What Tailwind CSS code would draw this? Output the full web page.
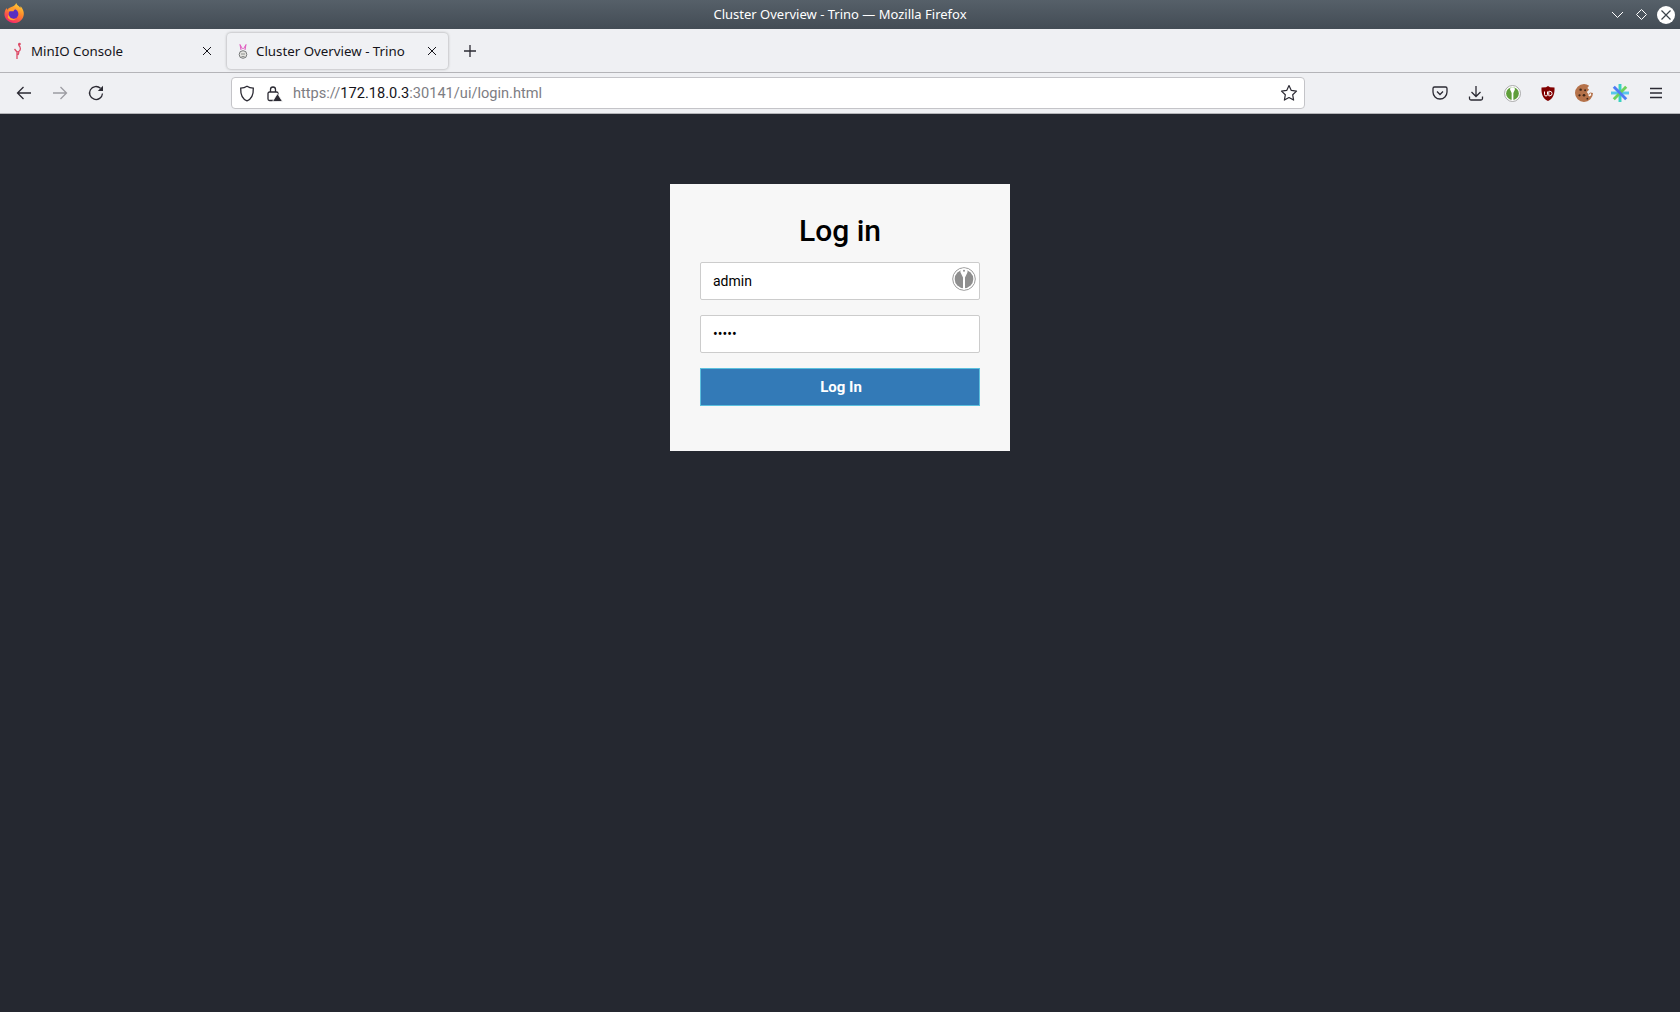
<!DOCTYPE html>
<html lang="en">
<head>
    <meta charset="UTF-8">
    <title>Cluster Overview - Trino</title>
    <script src="https://cdn.jsdelivr.net/npm/@tailwindcss/browser@4"></script>
</head>
<body class="h-screen overflow-hidden flex flex-col bg-[#252830] font-['Noto_Sans',sans-serif]">
    <!-- window title bar -->
    <div class="h-[29px] shrink-0 grid grid-cols-[1fr_auto_1fr] items-center bg-gradient-to-b from-[#566069] to-[#434c55] text-white text-[13px]">
        <div class="pl-[4px] pb-[3px] flex items-center">
            <svg width="20" height="22" viewBox="0 0 22 24">
                <defs>
                    <linearGradient id="fx" x1="0.8" y1="0" x2="0.3" y2="1"><stop offset="0" stop-color="#ffd93a"/><stop offset="0.45" stop-color="#ff8a2a"/><stop offset="1" stop-color="#f5206e"/></linearGradient>
                </defs>
                <path d="M13.500 1c.5 2.500 3 3 4.500 5.500 0-.5 0-1.500.3-2C20.500 7 22 10 21.800 13c-.3 6-5 10-10.800 10S.5 18.500.5 13.500c0-2.500.8-5 2.300-7 .2 1 .5 1.500 1 2 .8-1.500 2.700-2.500 4.200-3 2-.7 4.500-2 5.500-4.500z" fill="url(#fx)"/>
                <circle cx="10.500" cy="13" r="5.300" fill="#5a2fc0"/>
                <path d="M4.500 10c1-3.500 6-5 9.500-3-1.500.5-3 1.500-3.500 3z" fill="#ff9d2e"/>
                <path d="M5 14c1 3.500 4.500 5.500 8.500 4.500-3 2.500-8 1.500-9.500-1.500z" fill="#ffb02e" opacity="0.9"/>
            </svg>
        </div>
        <div class="leading-none">Cluster Overview - Trino — Mozilla Firefox</div>
        <div class="flex items-center justify-end gap-[7px] pr-[5px]">
            <svg width="17" height="17" viewBox="0 0 17 17" fill="none" stroke="#fff" stroke-width="1"><path d="M3 6l5.500 5.500L14 6"/></svg>
            <svg width="17" height="17" viewBox="0 0 17 17" fill="none" stroke="#fff" stroke-width="1"><path d="M8.500 3.500l5 5-5 5-5-5z"/></svg>
            <svg width="18" height="18" viewBox="0 0 18 18" fill="none" stroke="#3b424a" stroke-width="1.200"><circle cx="9" cy="9" r="9" fill="#fff" stroke="none"/><path d="M4.500 4.500l9 9M13.500 4.500l-9 9"/></svg>
        </div>
    </div>

    <!-- tab strip -->
    <div class="h-[44px] shrink-0 flex items-center pl-[2px] gap-1 bg-[#eff0f3] border-b border-[#b4b4b8] text-[13.300px] text-[#15141a]">
        <div class="w-[221px] h-9 flex items-center pl-[9px] pr-[11px] rounded-[4px]">
            <svg width="14" height="18" viewBox="0 0 14 18" fill="none" stroke="#dd4a66" stroke-width="1.300" class="mr-[6px]"><path d="M6 17V10C9 10 10 7 9 5S7 3 8 2M6 10L3.500 7M8 10l-1 3"/><circle cx="8.500" cy="2" r="1.300" fill="#dd4a66" stroke="none"/></svg>
            <span class="flex-1 truncate pt-[2px]">MinIO Console</span>
            <svg width="10" height="10" viewBox="0 0 10 10" stroke="#15141a" stroke-width="1"><path d="M1 1l8 8M9 1l-8 8"/></svg>
        </div>
        <div class="w-[221px] h-9 flex items-center pl-[9px] pr-[11px] rounded-[4px] bg-[#f0f1f4] shadow-[0_0_3px_rgba(0,0,0,0.35)]">
            <svg width="14" height="18" viewBox="0 0 14 18" fill="none" class="mr-[6px]">
                <path d="M5 8L4 2.500 6.500 7M9 8l1-5.500L7.500 7" stroke="#e05cc0" stroke-width="1"/>
                <circle cx="7" cy="12.500" r="3.800" fill="#e4e4e0" stroke="#77797a" stroke-width="1"/>
                <path d="M5 12h4M5.500 14.500h3" stroke="#77797a" stroke-width="0.800"/>
            </svg>
            <span class="flex-1 truncate pt-[2px]">Cluster Overview - Trino</span>
            <svg width="10" height="10" viewBox="0 0 10 10" stroke="#15141a" stroke-width="1"><path d="M1 1l8 8M9 1l-8 8"/></svg>
        </div>
        <div class="w-9 h-9 flex items-center justify-center">
            <svg width="14" height="14" viewBox="0 0 14 14" stroke="#2b2a33" stroke-width="1.300"><path d="M7 1v12M1 7h12"/></svg>
        </div>
    </div>

    <!-- nav bar -->
    <div class="h-[41px] shrink-0 flex items-center pl-[6px] pr-[6px] border-b border-[#b4b4b8] bg-[#eff0f3]">
        <div class="w-9 h-9 flex items-center justify-center">
            <svg width="16" height="16" viewBox="0 0 16 16" fill="none" stroke="#2b2a33" stroke-width="1.300"><path d="M15 8H1.500M7.500 2l-6 6 6 6"/></svg>
        </div>
        <div class="w-9 h-9 flex items-center justify-center">
            <svg width="16" height="16" viewBox="0 0 16 16" fill="none" stroke="#9c9ca2" stroke-width="1.300"><path d="M1 8h13.500M8.500 2l6 6-6 6"/></svg>
        </div>
        <div class="w-9 h-9 flex items-center justify-center">
            <svg width="16" height="16" viewBox="0 0 16 16" fill="none" stroke="#2b2a33" stroke-width="1.300"><path d="M14.500 8.500A6.500 6.500 0 1 1 12.500 3.300"/><path d="M15 .800v5.200H9.800z" fill="#2b2a33" stroke="none"/></svg>
        </div>
        <!-- url box -->
        <div class="ml-[117px] w-[1074px] h-8 flex items-center bg-white border border-[#c4c4c8] rounded-[4px]">
            <svg width="16" height="17" viewBox="0 0 16 17" fill="none" stroke="#2b2a33" stroke-width="1.300" class="ml-[7px]"><path d="M8 1.200c2 1.300 4 1.800 6.300 2 .2 6-1.600 10.800-6.300 12.600C3.300 14 1.500 9.200 1.700 3.200 4 3 6 2.500 8 1.200z"/></svg>
            <svg width="17" height="17" viewBox="0 0 17 17" fill="none" class="ml-[11px]">
                <rect x="2" y="7" width="10" height="8.500" rx="1.500" stroke="#2b2a33" stroke-width="1.300"/>
                <path d="M4.500 7V4.500a2.500 2.500 0 0 1 5 0V7" stroke="#2b2a33" stroke-width="1.300"/>
                <path d="M11.500 8.500l5 8h-10z" fill="#2b2a33" stroke="#fff" stroke-width="0.800"/>
            </svg>
            <div class="ml-[10px] flex-1 text-[14.600px] leading-none font-['Roboto',sans-serif] text-[#7d7d83]">https://<span class="text-[#15141a]">172.18.0.3</span>:30141/ui/login.html</div>
            <svg width="18" height="18" viewBox="0 0 18 18" fill="none" stroke="#2b2a33" stroke-width="1.200" class="mr-[6px]"><path d="M9 1.500l2.300 4.900 5.200.7-3.800 3.700.9 5.300L9 13.500l-4.600 2.600.9-5.300-3.800-3.700 5.200-.7z" stroke-linejoin="round"/></svg>
        </div>
        <!-- toolbar icons -->
        <div class="ml-auto flex items-center">
            <div class="w-9 h-9 flex items-center justify-center">
                <svg width="16" height="16" viewBox="0 0 16 16" fill="none" stroke="#2b2a33" stroke-width="1.300"><path d="M2.500 2h11A1.500 1.500 0 0 1 15 3.500V7a7 7 0 0 1-14 0V3.500A1.500 1.500 0 0 1 2.500 2z"/><path d="M5 6.500l3 3 3-3"/></svg>
            </div>
            <div class="w-9 h-9 flex items-center justify-center">
                <svg width="16" height="16" viewBox="0 0 16 16" fill="none" stroke="#2b2a33" stroke-width="1.300"><path d="M8 1v10M3.500 7L8 11.500 12.500 7M1.500 11.500v2a1.500 1.500 0 0 0 1.500 1.500h10a1.500 1.500 0 0 0 1.500-1.500v-2"/></svg>
            </div>
            <div class="w-9 h-9 flex items-center justify-center">
                <svg width="17" height="17" viewBox="0 0 16 16"><circle cx="8" cy="8" r="7.500" fill="#fff" stroke="#9a9a9a" stroke-width="0.800"/><circle cx="8" cy="8" r="6" fill="#5f9e3a"/><path d="M8 2C5.800 2 5.300 3.800 6 5l1.200 2.500V14h1.600V7.500L10 5c.7-1.200.2-3-2-3z" fill="#fff"/></svg>
            </div>
            <div class="w-9 h-9 flex items-center justify-center">
                <svg width="16" height="17" viewBox="0 0 16 16"><path d="M8 .500l2 1.200 4.500.3c.3 6-1 11-6.500 13.500C2.500 13 1.200 8 1.500 2L6 1.700z" fill="#800000"/><path d="M4.500 6v3a1.500 1.500 0 0 0 3 0V6M8.800 5.800v4.500h1a2.250 2.250 0 0 0 0-4.500z" fill="none" stroke="#fff" stroke-width="1"/></svg>
            </div>
            <div class="w-9 h-9 flex items-center justify-center">
                <svg width="18" height="18" viewBox="0 0 16 16"><path d="M8 0a8 8 0 1 0 8 8l-2.500-.500-1.500 1.500-1.500-2L12.500 5 11 3.500 12.500 1.500A8 8 0 0 0 8 0z" fill="#b5724a"/><path d="M14 8l-1.500 1.500-1-.5 1 2 2-1z" fill="#fff"/><circle cx="5" cy="5" r="1.100" fill="#3d2618"/><circle cx="9" cy="5.500" r="0.900" fill="#3d2618"/><circle cx="4" cy="10" r="1" fill="#3d2618"/><circle cx="8" cy="10" r="1.200" fill="#3d2618"/><circle cx="11" cy="13" r="0.800" fill="#3d2618"/></svg>
            </div>
            <div class="w-9 h-9 flex items-center justify-center">
                <svg width="18" height="18" viewBox="0 0 16 16" fill="none" stroke-width="2.600"><path d="M0 8h16" stroke="#57c7ea"/><path d="M8 0v16" stroke="#39d2c0"/><path d="M13.500 2.500l-11 11" stroke="#6fd15b"/><path d="M2.500 2.500l11 11" stroke="#4f7cf5"/></svg>
            </div>
            <div class="w-9 h-9 flex items-center justify-center">
                <svg width="14" height="12" viewBox="0 0 14 12" stroke="#2b2a33" stroke-width="1.300"><path d="M1 1.500h12M1 6h12M1 10.500h12"/></svg>
            </div>
        </div>
    </div>

    <!-- page -->
    <div class="flex-1 bg-[#252830] font-['Roboto',sans-serif]">
        <form class="w-[340px] h-[267px] mt-[70px] mx-auto px-[30px] bg-[#f7f7f7]">
            <h1 class="pt-[26px] h-[78px] text-center text-[30px] leading-[42px] font-medium text-black">Log in</h1>
            <div class="relative mb-[15px]">
                <input type="text" value="admin" class="w-full h-[38px] px-3 bg-white border border-[#ccc] rounded-[2px] text-[14px] text-black outline-none">
                <svg width="24" height="24" viewBox="0 0 24 24" class="absolute right-[4px] top-[5px]"><circle cx="12" cy="12" r="11.300" fill="#fff" stroke="#9a9a9a" stroke-width="1"/><circle cx="12" cy="12" r="9.300" fill="#8e8e8e"/><path d="M12 1.500C8.500 1.500 7.800 4 8.800 6L11 10.500V22.500h2V10.500L15.200 6c1-2 .3-4.500-3.200-4.500z" fill="#fff"/><circle cx="12" cy="3.700" r="1" fill="#8e8e8e"/></svg>
            </div>
            <input type="password" value="admin" class="block w-full h-[38px] mb-[15px] px-3 bg-white border border-[#ccc] rounded-[2px] text-[14px] text-black outline-none">
            <button type="button" class="block w-full h-[38px] pl-[2px] bg-[#337ab7] border border-[#5bc0de] text-white text-[15px] font-bold">Log In</button>
        </form>
    </div>
</body>
</html>
